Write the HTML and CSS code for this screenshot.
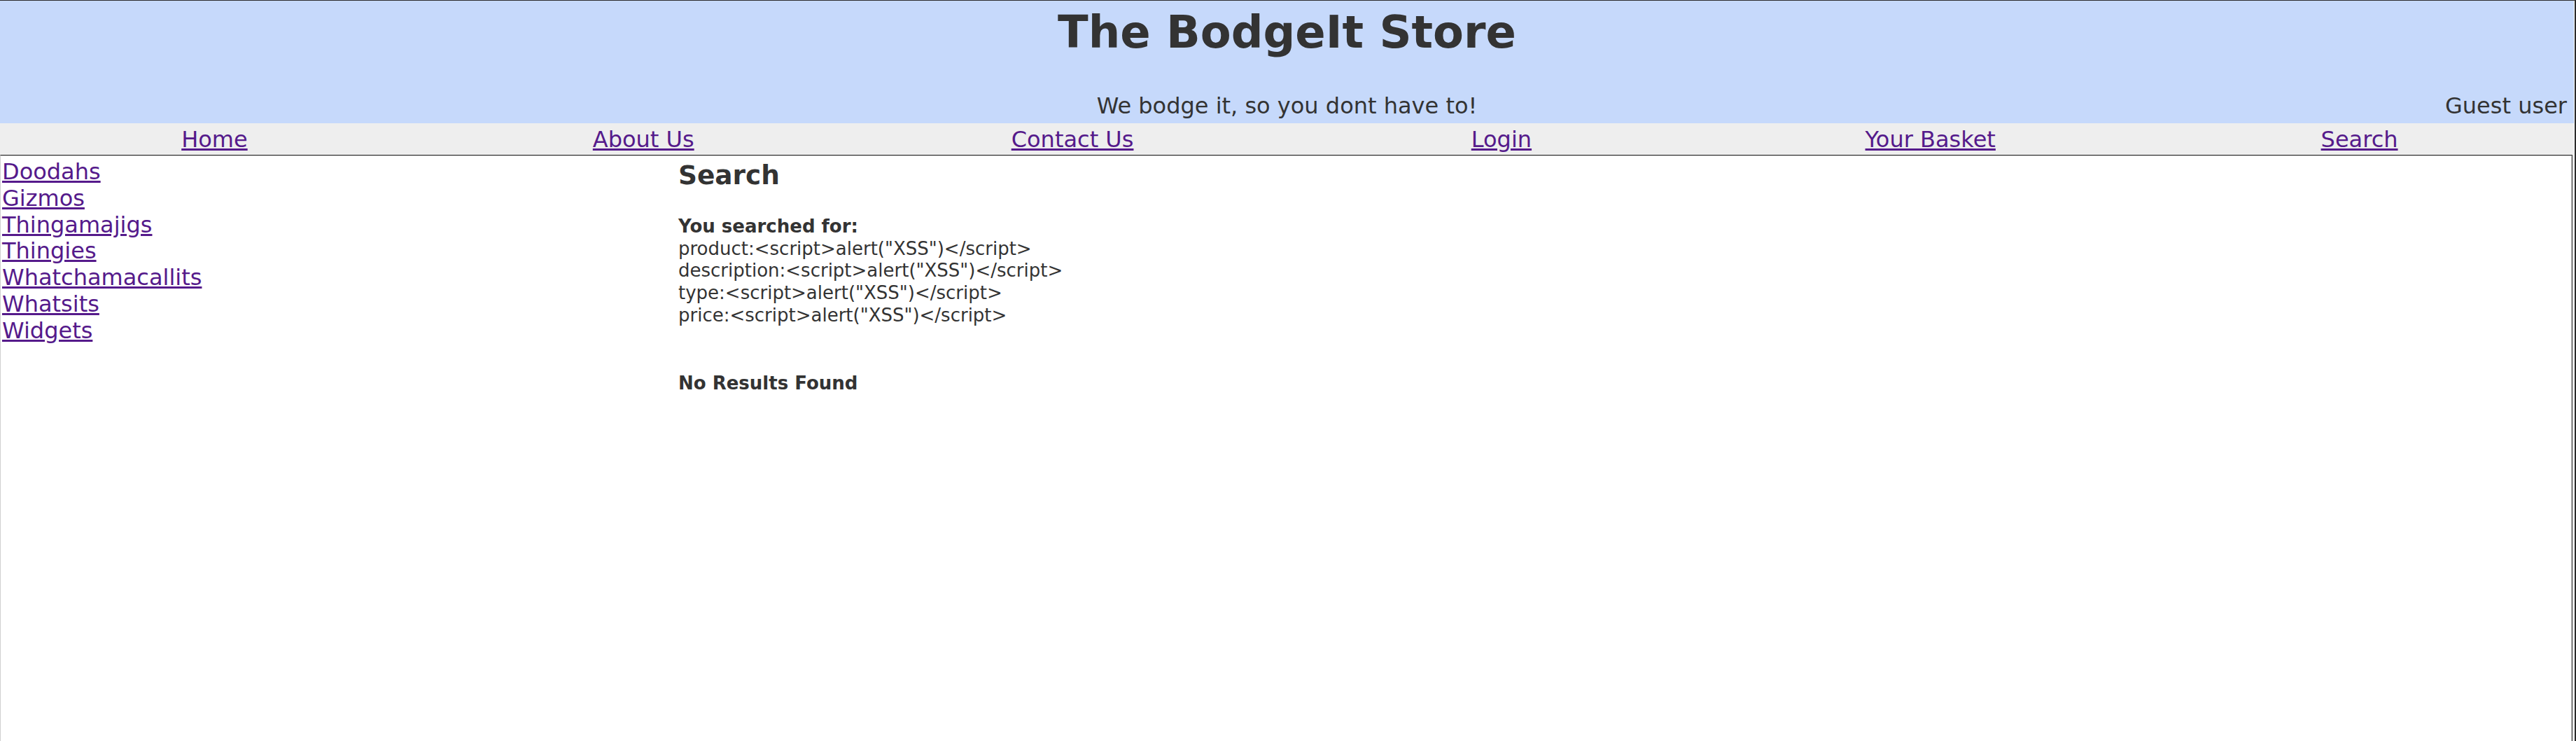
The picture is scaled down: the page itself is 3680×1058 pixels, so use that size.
FILE: index.html
```html
<!DOCTYPE html>
<html lang="en">
<head>
<meta charset="utf-8">
<title>The BodgeIt Store</title>
<link rel="stylesheet" href="styles.css">
</head>
<body>
<div class="page">
  <header class="masthead">
    <h1 class="title">The BodgeIt Store</h1>
    <div class="tagline-row">
      <div class="spacer"></div>
      <div class="tagline">We bodge it, so you dont have to!</div>
      <div class="user">Guest user</div>
    </div>
  </header>
  <nav class="nav">
    <a href="#">Home</a>
    <a href="#">About Us</a>
    <a href="#">Contact Us</a>
    <a href="#">Login</a>
    <a href="#">Your Basket</a>
    <a href="#">Search</a>
  </nav>
  <div class="main">
    <div class="main-inner">
      <aside class="sidebar">
        <a href="#">Doodahs</a>
        <a href="#">Gizmos</a>
        <a href="#">Thingamajigs</a>
        <a href="#">Thingies</a>
        <a href="#">Whatchamacallits</a>
        <a href="#">Whatsits</a>
        <a href="#">Widgets</a>
      </aside>
      <section class="content">
        <h3 class="heading">Search</h3>
        <div class="query">
          <div class="query-label">You searched for:</div>
          <div>product:&lt;script&gt;alert("XSS")&lt;/script&gt;</div>
          <div>description:&lt;script&gt;alert("XSS")&lt;/script&gt;</div>
          <div>type:&lt;script&gt;alert("XSS")&lt;/script&gt;</div>
          <div>price:&lt;script&gt;alert("XSS")&lt;/script&gt;</div>
        </div>
        <div class="no-results">No Results Found</div>
      </section>
    </div>
  </div>
</div>
</body>
</html>
```

FILE: styles.css
```css
html, body {
  margin: 0;
  padding: 0;
  background: #ffffff;
}

body {
  font-family: "DejaVu Sans", Verdana, sans-serif;
  color: #333333;
}

a {
  color: #551a8b;
  text-decoration: underline;
}

.page {
  box-sizing: border-box;
  height: 100vh;
  display: flex;
  flex-direction: column;
  border-top: 1px solid #2b2b2b;
  border-right: 2px solid #2b2b2b;
}

.masthead {
  background: #c6d9fb;
  margin-right: 1px;
  padding: 7px 0 6px 0;
}

.title {
  margin: 0;
  text-align: center;
  font-size: 64px;
  line-height: 76px;
  font-weight: bold;
  color: #333333;
}

.tagline-row {
  display: grid;
  grid-template-columns: 30% 40% 30%;
  margin-top: 48px;
  font-size: 32px;
  line-height: 38px;
}

.tagline {
  text-align: center;
}

.user {
  text-align: right;
  padding-right: 10px;
}

.nav {
  display: grid;
  grid-template-columns: repeat(6, 1fr);
  background: #eeeeee;
  margin-right: 1px;
  padding: 4px 0 3px 0;
  font-size: 32px;
  line-height: 38px;
  text-align: center;
}

.nav a {
  justify-self: center;
}

.main {
  flex: 1;
  display: flex;
  flex-direction: column;
  margin-right: 3px;
  border-top: 1px solid #2b2b2b;
  border-right: 1px solid #2b2b2b;
  border-left: 1px solid #cfcfcf;
}

.main-inner {
  flex: 1;
  display: grid;
  grid-template-columns: 966px 1fr;
  align-items: start;
  border-top: 1px solid #cfcfcf;
  border-right: 1px solid #cfcfcf;
}

.sidebar {
  display: flex;
  flex-direction: column;
  align-items: flex-start;
  padding: 4px 0 0 2px;
  font-size: 32px;
  line-height: 37.8px;
}

.content {
  padding: 5px 0 0 2px;
}

.heading {
  margin: 0;
  font-size: 37.44px;
  line-height: 44px;
  font-weight: bold;
  color: #333333;
}

.query {
  margin-top: 36px;
  font-size: 26px;
  line-height: 31.7px;
}

.query-label {
  font-weight: bold;
}

.no-results {
  margin-top: 65px;
  font-size: 26px;
  line-height: 31.7px;
  font-weight: bold;
}
```
